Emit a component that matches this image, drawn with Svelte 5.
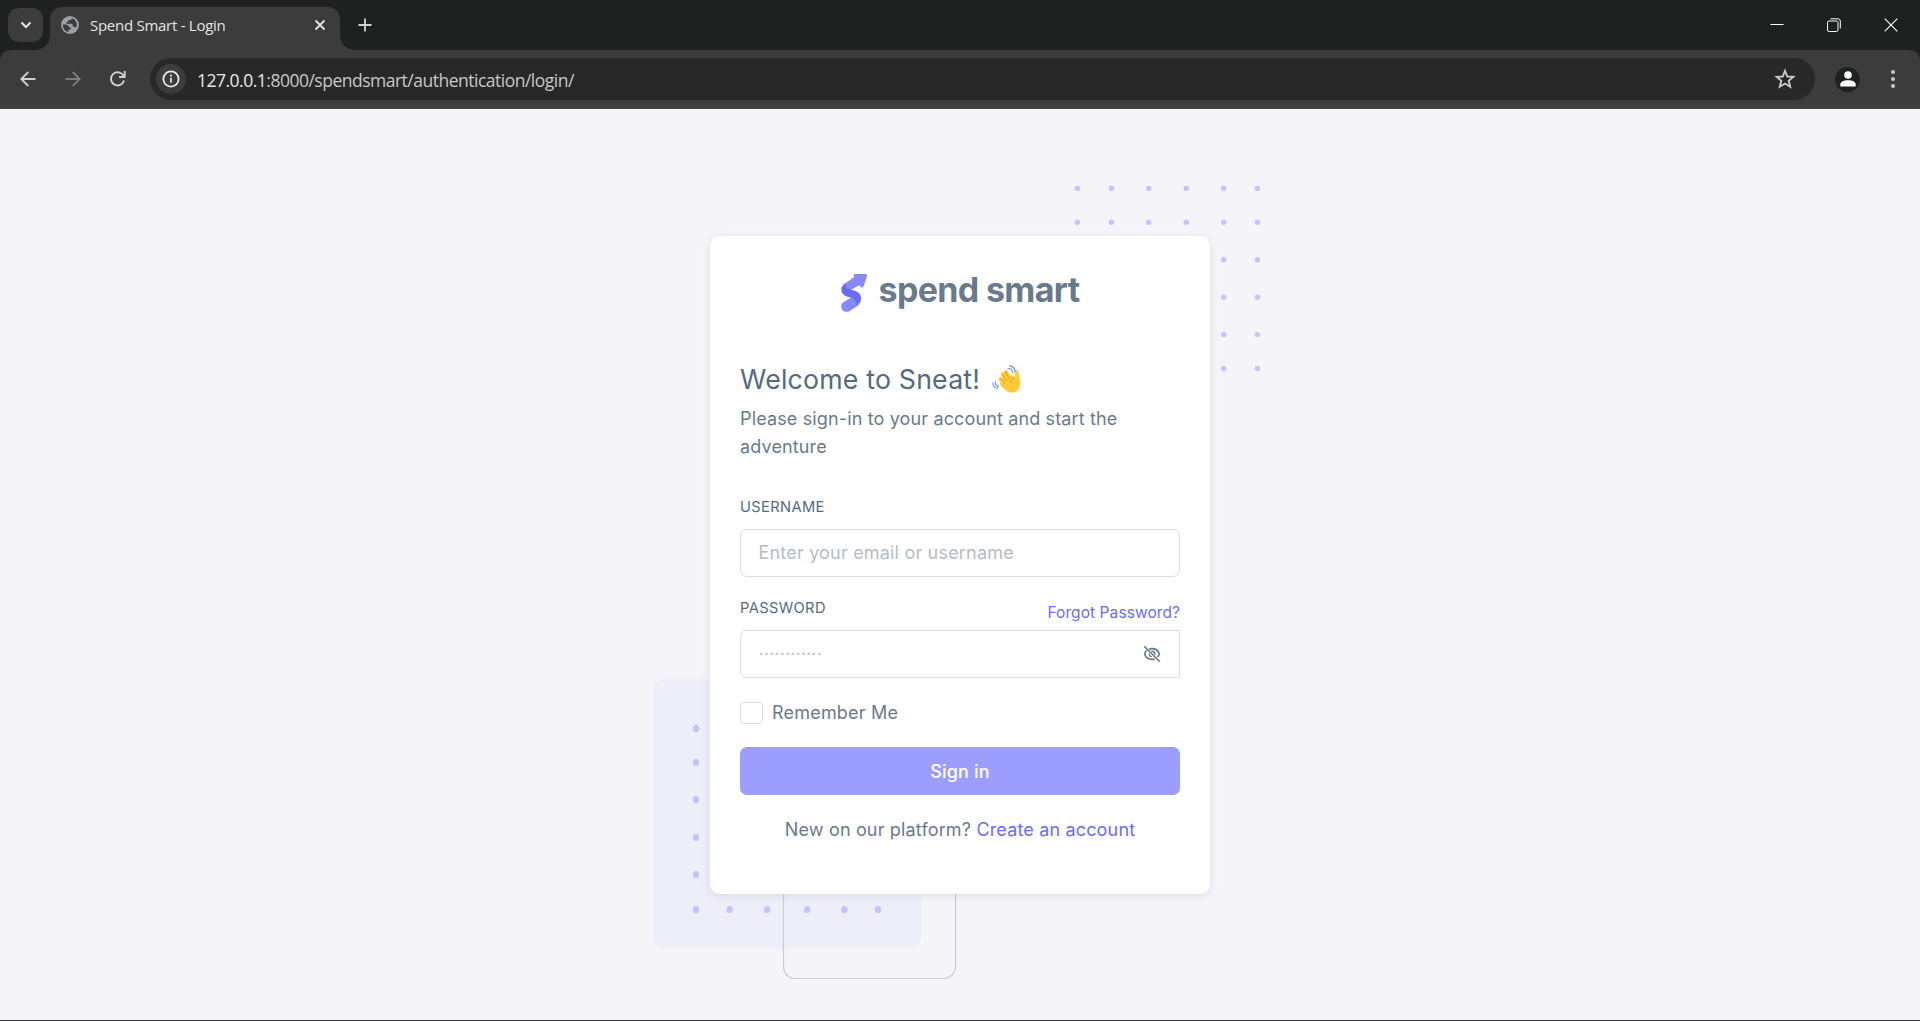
<script>
  const topX = [1077.4, 1111.4, 1148.7, 1186.3, 1223.7, 1257.4];
  const topY = [79.4, 113.3, 150.7, 188.3, 225.6, 259.5];
  const lowX = [696, 729.6, 767, 807, 844.4, 878];
  const lowY = [619.4, 653.4, 690.7, 728.3, 765.7, 800.7];
  const grid = (xs, ys) => ys.flatMap((y) => xs.map((x) => ({ x, y })));
  const topDots = grid(topX, topY);
  const lowDots = grid(lowX, lowY);
</script>

<div class="window">
  <header class="strip">
    <button class="tab-search" aria-label="Search tabs">
      <svg width="12" height="12" viewBox="0 0 12 12"><path d="M1.5 3.5 6 8l4.500-4.500" fill="none" stroke="#e3e3e3" stroke-width="2" /></svg>
    </button>
    <div class="tab">
      <svg class="globe" width="18" height="18" viewBox="0 0 18 18">
        <circle cx="9" cy="9" r="9" fill="#9aa0a6" />
        <path d="M1.700 8.600h2.800c1.900 0 3.200.9 3.200 2.600h2v2.300H7.500v2.600A7.300 7.300 0 0 1 1.700 8.600z" fill="#3c3c3c" />
        <path d="M11 1.900v.3c0 1-.8 1.800-1.800 1.800H7.400v1.900H5.600v1.900h4.800c1 0 1.300.8 1.300 1.700v1.200h1.500c.9 0 1.500.6 1.700 1.400A7.300 7.300 0 0 0 11 1.900z" fill="#3c3c3c" />
      </svg>
      <span class="tab-title">Spend Smart - Login</span>
      <svg width="12" height="12" viewBox="0 0 12 12"><path d="m1.500 1.500 9 9m0-9-9 9" stroke="#e3e3e3" stroke-width="1.800" /></svg>
    </div>
    <svg class="plus" width="14" height="14" viewBox="0 0 14 14"><path d="M7 .5v13M.5 7h13" stroke="#d2d2d2" stroke-width="1.800" /></svg>
    <div class="controls">
      <svg width="14" height="14" viewBox="0 0 14 14"><path d="M.5 6.500h13" stroke="#fff" /></svg>
      <svg width="14" height="14" viewBox="0 0 14 14" fill="none" stroke="#fff"><rect x=".5" y="3" width="10.500" height="10.500" rx="1.500" /><path d="M3.500.8H11A2.300 2.300 0 0 1 13.300 3v7.500" /></svg>
      <svg width="14" height="14" viewBox="0 0 14 14"><path d="m.7.7 12.600 12.600m0-12.600L.7 13.300" stroke="#fff" stroke-width="1.100" /></svg>
    </div>
  </header>

  <nav class="toolbar">
    <svg class="back" width="16" height="16" viewBox="0 0 16 16" fill="none" stroke="#d0d0d0" stroke-width="1.800"><path d="M15.500 8H1.500M8.300 1 1.300 8l7 7" /></svg>
    <svg class="forward" width="16" height="16" viewBox="0 0 16 16" fill="none" stroke="#7d7d7d" stroke-width="1.800"><path d="M.5 8h14M7.700 1l7 7-7 7" /></svg>
    <svg class="reload" width="16" height="16" viewBox="0 0 16 16" fill="none" stroke="#d0d0d0" stroke-width="1.900"><path d="M14 9.500A6.600 6.600 0 1 1 13.600 5M14.700 0v6H9" /></svg>
    <div class="address">
      <span class="info">
        <svg width="18" height="18" viewBox="0 0 18 18"><circle cx="9" cy="9" r="7.600" fill="none" stroke="#e8e8e8" stroke-width="1.800" /><path d="M9 7.800v5M9 4.600v1.900" stroke="#e8e8e8" stroke-width="1.700" /></svg>
      </span>
      <span class="url"><b>127.0.0.1</b>:8000/spendsmart/authentication/login/</span>
      <svg width="22" height="22" viewBox="0 0 22 22"><path d="m11 2.800 2.300 5.700 6 .4-4.600 3.900 1.500 5.900L11 15.500l-5.200 3.200 1.500-5.900L2.700 8.900l6-.4z" fill="none" stroke="#c9c9c9" stroke-width="1.900" /></svg>
    </div>
    <span class="avatar">
      <svg width="16" height="16" viewBox="0 0 16 16" fill="#fff"><circle cx="8" cy="4" r="3.800" /><path d="M.3 15.500v-2C.3 10.800 4 9.300 8 9.300s7.700 1.500 7.700 4.200v2z" /></svg>
    </span>
    <svg class="menu" width="6" height="20" viewBox="0 0 6 20" fill="#c9c9c9"><circle cx="3" cy="3" r="2" /><circle cx="3" cy="10" r="2" /><circle cx="3" cy="17" r="2" /></svg>
  </nav>

  <main class="page">
    <svg class="decor" width="1920" height="911" viewBox="0 0 1920 911">
      <rect x="653" y="570" width="268" height="270" rx="12" fill="#eeeef9" />
      <rect x="783.500" y="650" width="172" height="219.500" rx="12" fill="none" stroke="#c8ccd8" stroke-width="1.200" />
      {#each topDots as d}<circle cx={d.x} cy={d.y} r="2.700" fill="#c3c4ff" />{/each}
      {#each lowDots as d}<ellipse cx={d.x} cy={d.y} rx="3.200" ry="3.600" fill="#c3c4ff" />{/each}
    </svg>

    <section class="card">
      <div class="brand">
        <svg width="28" height="40" viewBox="60 54 84 120">
          <path d="M103 57h34q6 1 4 7l-10 30q-3 7-8 3l-5-6-38 20-15-10q0-10 12-17l26-18q-4-8 0-9z" fill="#8789ff" />
          <path d="m93 128-22 13q-10 7-7 18 6 14 21 11l26-16q14-12 11-24z" fill="#8789ff" />
          <path d="M79 83q-19 11-14 27 4 11 17 15l16 5q12 6 10 24 16-12 15-27-2-13-15-18l-20-7q-14-6-9-19z" fill="#696cff" />
        </svg>
        <span class="brand-name">spend smart</span>
      </div>

      <h4>
        <span class="welcome">Welcome to Sneat!</span>
        <svg width="29" height="29" viewBox="0 0 29 29">
          <g fill="none" stroke="#ffca38" stroke-width="4" stroke-linecap="round"><path d="m19 18-5-11M16 18 11 9M14 20l-5.500-6M14 22l-4-3.500" /></g>
          <path d="M11 13.500 19.500 10l3.500 2-.5-5.500c.4-2 3.300-2 4 .2l1.500 8.800c.5 3.500-.2 6.500-1.800 9-2.300 3.500-6.900 4-10.700 2L8.500 21z" fill="#ffca38" />
          <path d="m17.500 13.500-4-6.200M14.500 15.500 10.500 10M13 18.500l-4-4.500M22 13.500c-2.200.5-3.200 2.200-2.700 4" fill="none" stroke="#e59600" stroke-width=".9" stroke-linecap="round" />
          <g fill="none" stroke="#5a93f0" stroke-width="1.100" stroke-linecap="round"><path d="M16 3.500c2.500-.2 4.200 1.500 4.500 4M17.500.9c3.400.2 5.200 2.300 5.500 5.500M3.300 16.800c-.2 2.400 1.200 4.200 3.500 4.700M.8 18c.2 3.200 2.200 5 5 5.300" /></g>
        </svg>
      </h4>
      <p class="intro">Please sign-in to your account and start the adventure</p>

      <label class="field-label user" for="user">USERNAME</label>
      <div class="field"><input id="user" placeholder="Enter your email or username" /></div>

      <div class="password-row">
        <label class="field-label" for="pass">PASSWORD</label>
        <a class="forgot" href="#forgot">Forgot Password?</a>
      </div>
      <div class="field secret">
        <input id="pass" placeholder="············" />
        <svg width="18" height="18" viewBox="0 0 18 18" fill="none" stroke="#697a8d" stroke-width="1.600">
          <path d="M6 4.200C7 3.800 8 3.600 9 3.600c3.800 0 6.400 2.200 7.300 5.400-.4 1.300-1 2.300-1.900 3.200M3.600 5.300C2.600 6.300 2 7.600 1.700 9c.9 3.200 3.500 5.400 7.300 5.400 1 0 1.900-.1 2.700-.4M1.200 1.300l15.600 15.400" />
          <path d="M8.500 6a3.200 3.200 0 0 1 3.500 3.600z" fill="#697a8d" stroke="none" /><path d="M8.300 6.200A3 3 0 0 1 12 9.800M6.100 8.500c-.1 1.700 1 3 2.600 3.300" stroke-width="1.200" />
        </svg>
      </div>

      <label class="remember"><input type="checkbox" /><span>Remember Me</span></label>
      <button class="submit">Sign in</button>
      <p class="signup"><span>New on our platform?</span> <a href="#create">Create an account</a></p>
    </section>
  </main>
</div>

<style>
  :global(body) { margin: 0; overflow: hidden; }
  * { box-sizing: border-box; }
  .window { width: 1920px; height: 1021px; display: flex; flex-direction: column; background: #1f2120; border-bottom: 1px solid #3a3a3c; }
  svg { flex: none; display: block; }
  button { border: 0; padding: 0; font: inherit; }

  .strip { height: 50px; flex: none; display: flex; align-items: center; padding-left: 8px; font-family: "Open Sans", sans-serif; }
  .tab-search { width: 35px; height: 34px; border-radius: 11px; background: #3c3c3c; display: grid; place-items: center; }
  .tab { position: relative; align-self: flex-end; width: 290px; height: 43px; margin-left: 7px; padding: 0 14px 7px 11px; border-radius: 12px 12px 0 0; background: #3c3c3c; display: flex; align-items: center; }
  .tab::before, .tab::after { content: ""; position: absolute; bottom: 0; width: 14px; height: 14px; }
  .tab::before { left: -14px; background: radial-gradient(circle at 0 0, transparent 13.500px, #3c3c3c 14px); }
  .tab::after { right: -14px; background: radial-gradient(circle at 100% 0, transparent 13.500px, #3c3c3c 14px); }
  .tab-title { flex: 1; margin-left: 11px; color: #e3e3e3; font-size: 15px; line-height: 20px; letter-spacing: -0.27px; white-space: nowrap; }
  .plus { margin-left: 18px; }
  .controls { margin-left: auto; margin-right: 22px; display: flex; gap: 43px; }

  .toolbar { height: 59px; flex: none; display: flex; align-items: center; background: #3c3c3c; border-radius: 10px 10px 0 0; border-bottom: 1px solid #4a4444; font-family: "Open Sans", sans-serif; }
  .back { margin-left: 20px; }
  .forward { margin-left: 29px; }
  .reload { margin-left: 29px; }
  .address { width: 1665px; height: 42px; margin-left: 24px; padding: 0 19px 0 6px; border-radius: 21px; background: #282828; display: flex; align-items: center; }
  .info { width: 30px; height: 30px; border-radius: 50%; background: #3c3c3c; display: grid; place-items: center; }
  .url { flex: 1; margin-left: 11px; padding-top: 1px; font-size: 17.500px; line-height: 24px; letter-spacing: -0.5px; color: #c7c7c7; }
  .url b { font-weight: 400; color: #e8e8e8; }
  .avatar { width: 25px; height: 25px; margin-left: 20px; border-radius: 50%; background: #1f2120; display: grid; place-items: center; }
  .menu { margin-left: 30px; }

  .page { position: relative; flex: 1; display: flex; align-items: center; justify-content: center; background: #f4f4f9; font-family: Inter, sans-serif; color: #697a8d; }
  .decor { position: absolute; left: 0; top: 0; }
  .card { position: relative; width: 500px; height: 658px; padding: 27px 30px 0; border-radius: 10px; background: #fff; box-shadow: 0 2px 8px rgba(67, 89, 113, 0.12); display: flex; flex-direction: column; }
  .brand { height: 53px; display: flex; align-items: center; justify-content: center; gap: 10px; }
  .brand svg { margin-top: 7px; }
  .brand-name { font-size: 34px; font-weight: 700; line-height: 53px; letter-spacing: -0.65px; white-space: nowrap; }
  h4 { margin: 46px 0 0; height: 34px; display: flex; align-items: center; gap: 12px; font-size: 26.700px; font-weight: 400; line-height: 34px; color: #566a7f; white-space: nowrap; }
  h4 svg { margin-top: 2px; }
  .welcome { letter-spacing: 0.2px; }
  .intro { margin: 9px 0 0; font-size: 18px; line-height: 28px; letter-spacing: 0.14px; }
  .field-label { display: block; font-size: 14.700px; line-height: 20px; letter-spacing: 0.35px; color: #566a7f; }
  .user { margin-top: 36px; }
  .field { height: 48px; flex: none; display: flex; align-items: center; border: 1px solid #d9dee3; border-radius: 7px; padding: 0 18px 0 17.500px; }
  .user + .field { margin-top: 12px; }
  .field input { flex: 1; min-width: 0; border: 0; outline: 0; padding: 1px 0 0; background: none; font: 18px/28px Inter, sans-serif; letter-spacing: 0.19px; color: #697a8d; }
  .field input::placeholder { color: #b4bdc6; opacity: 1; }
  .field.secret input { padding-top: 0; letter-spacing: 0.1px; }
  .secret { border-radius: 7px 0 0 7px; }
  .password-row { margin-top: 21px; height: 32px; flex: none; display: flex; justify-content: space-between; }
  .forgot { margin-top: 5px; font-size: 15.500px; line-height: 20px; letter-spacing: 0.08px; }
  a { color: #696cff; text-decoration: none; }
  .remember { margin-top: 24px; height: 22px; display: flex; align-items: center; gap: 9px; font-size: 18px; line-height: 22px; letter-spacing: 0.2px; }
  .remember input { appearance: none; width: 23px; height: 22px; margin: 0; border: 1px solid #d9dee3; border-radius: 4px; }
  .submit { margin-top: 23px; height: 48px; flex: none; padding-top: 1px; border-radius: 7px; background: #9c9eff; color: #fff; font-size: 18px; font-weight: 550; line-height: 47px; letter-spacing: 0.15px; }
  .signup { margin: 21px 0 0; text-align: center; font-size: 18px; line-height: 28px; letter-spacing: 0.16px; white-space: nowrap; }
</style>
